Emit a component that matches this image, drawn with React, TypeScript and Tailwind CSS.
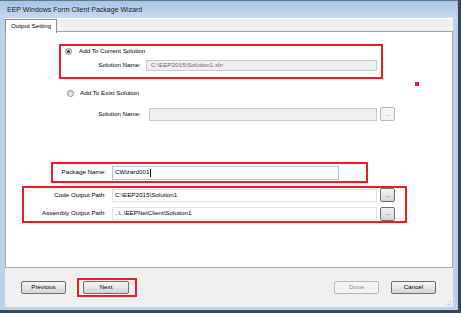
import type { ReactNode } from 'react'

const RED = 'border-2 border-[#ec1c24]'

function Radio({ checked }: { checked?: boolean }) {
  return (
    <span className="flex h-[7px] w-[7px] shrink-0 items-center justify-center rounded-full border border-[#8a8a8a] bg-gradient-to-br from-[#d2d2d2] to-[#fafafa]">
      {checked && <span className="h-[3px] w-[3px] rounded-full bg-[#1b3d6b]" />}
    </span>
  )
}

function Field({
  value,
  kind = 'normal',
  className,
  children,
}: {
  value?: string
  kind?: 'normal' | 'disabled' | 'focus'
  className: string
  children?: ReactNode
}) {
  const look =
    kind === 'disabled'
      ? 'border-[#cacaca] bg-[#f0f0f0] text-[#6d6d6d]'
      : kind === 'focus'
        ? 'border-[#9cc3ea] bg-white text-black'
        : 'border-[#dfe2e8] bg-white text-black'
  return (
    <div className={`flex shrink-0 items-center border pl-[2px] ${look} ${className}`}>
      {value}
      {children}
    </div>
  )
}

function Btn({ label, disabled, className }: { label: string; disabled?: boolean; className: string }) {
  return (
    <div
      className={`flex shrink-0 items-center justify-center rounded-[2px] border ${
        disabled
          ? 'border-[#b5b9bc] bg-[#f4f4f4] text-[#8a8a8a]'
          : 'border-[#707070] bg-gradient-to-b from-[#f3f3f3] via-[#e6e6e6] to-[#d4d4d4] text-black'
      } ${className}`}
    >
      {label}
    </div>
  )
}

export default function App() {
  return (
    <div className="h-[313px] w-[461px] overflow-hidden bg-[#34485a] font-['Liberation_Sans',Arial,sans-serif] text-[6.25px] leading-none text-black">
      <div className="flex h-[310px] w-[458px] flex-col border-t border-[#66778a] bg-[#bcd2ea]">
        {/* Title bar */}
        <div className="flex h-[17px] shrink-0 items-center bg-gradient-to-b from-[#a7c2e2] to-[#c7daef] pl-[7px] text-[7px] text-[#1b1b1b]">
          EEP Windows Form Client Package Wizard
        </div>

        <div className="flex flex-1 flex-col px-[5px] pb-[3px]">
          <div className="relative flex flex-1 flex-col bg-[#f0f0f0]">
            {/* Tab strip */}
            <div className="flex h-[13px] shrink-0 items-start border-t border-white">
              <div className="relative z-10 flex h-[14px] w-[52px] items-center border border-b-0 border-[#8e8f8f] bg-white pl-[5px]">
                Output Setting
              </div>
            </div>

            {/* Panel */}
            <div className="relative flex h-[237px] shrink-0 flex-col items-start border border-[#a7a7a7] bg-white">
              <div className={`ml-[53px] mt-[12px] flex h-[35px] w-[324px] flex-col ${RED}`}>
                <div className="flex h-[10px] items-center gap-[7px] pl-[4px]">
                  <Radio checked />
                  <span>Add To Current Solution</span>
                </div>
                <div className="mt-[4px] flex items-center">
                  <span className="w-[80px] text-right">Solution Name:</span>
                  <Field kind="disabled" value={'C:\\EEP2015\\Solution1.sln'} className="ml-[5px] h-[11px] w-[231px] pl-[4px]" />
                </div>
              </div>

              <div className="absolute left-[409px] top-[50px] h-[4px] w-[4px] bg-[#ec1c24]" />

              <div className="ml-[61px] mt-[9px] flex h-[10px] items-center gap-[6px]">
                <Radio />
                <span>Add To Exist Solution</span>
              </div>
              <div className="ml-[55px] mt-[9px] flex h-[14px] items-center">
                <span className="w-[80px] text-right">Solution Name:</span>
                <Field kind="disabled" className="ml-[8px] h-[13px] w-[228px]" />
                <Btn label="..." disabled className="ml-[3px] h-[14px] w-[15px] rounded-[2px]" />
              </div>

              <div className={`ml-[45px] mt-[41px] flex h-[21px] w-[317px] items-center ${RED}`}>
                <span className="w-[53px] text-right">Package Name:</span>
                <Field kind="focus" className="ml-[6px] h-[14px] w-[227px]">
                  <span>CWizard001</span>
                  <span className="ml-px h-[8px] w-px bg-black" />
                </Field>
              </div>

              <div className={`ml-[16px] mt-[3px] flex h-[37px] w-[385px] flex-col ${RED}`}>
                <div className="flex h-[14px] items-center">
                  <span className="w-[82px] text-right">Code Output Path:</span>
                  <Field value={'C:\\EEP2015\\Solution1'} className="ml-[6px] h-[13px] w-[265px]" />
                  <Btn label="..." className="ml-[3px] h-[14px] w-[15px]" />
                </div>
                <div className="mt-[4px] flex h-[15px] items-center">
                  <span className="w-[82px] text-right">Assembly Output Path:</span>
                  <Field value={'..\\..\\EEPNetClient\\Solution1'} className="ml-[6px] h-[13px] w-[265px]" />
                  <Btn label="..." className="ml-[3px] h-[14px] w-[15px]" />
                </div>
              </div>
            </div>

            {/* Bottom buttons */}
            <div className="flex flex-1 items-center">
              <Btn label="Previous" className="ml-[16px] h-[13px] w-[45px]" />
              <div className={`ml-[11px] flex h-[19px] w-[60px] items-center pl-[4px] ${RED}`}>
                <Btn label="Next" className="h-[13px] w-[46px]" />
              </div>
              <Btn label="Done" disabled className="ml-auto h-[13px] w-[45px]" />
              <Btn label="Cancel" className="ml-[12px] mr-[17px] h-[13px] w-[45px]" />
            </div>

            <svg className="absolute bottom-[1px] right-[1px]" width="7" height="7" viewBox="0 0 7 7">
              <g fill="#b9b9b9">
                <rect x="5" y="1" width="1" height="1" />
                <rect x="3" y="3" width="1" height="1" />
                <rect x="5" y="3" width="1" height="1" />
                <rect x="1" y="5" width="1" height="1" />
                <rect x="3" y="5" width="1" height="1" />
                <rect x="5" y="5" width="1" height="1" />
              </g>
            </svg>
          </div>
        </div>
      </div>
    </div>
  )
}
